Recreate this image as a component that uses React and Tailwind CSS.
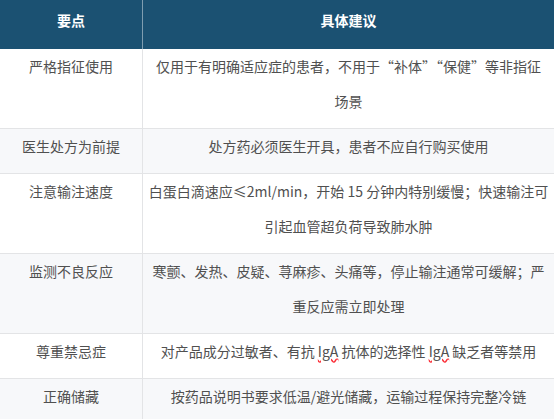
import React from 'react';

const rows = [
  {
    point: '严格指征使用',
    advice: ['仅用于有明确适应症的患者，不用于“补体”“保健”等非指征', '场景'],
  },
  {
    point: '医生处方为前提',
    advice: ['处方药必须医生开具，患者不应自行购买使用'],
  },
  {
    point: '注意输注速度',
    advice: ['白蛋白滴速应≤2ml/min，开始 15 分钟内特别缓慢；快速输注可', '引起血管超负荷导致肺水肿'],
  },
  {
    point: '监测不良反应',
    advice: ['寒颤、发热、皮疑、荨麻疹、头痛等，停止输注通常可缓解；严', '重反应需立即处理'],
  },
  {
    point: '尊重禁忌症',
    advice: [
      <>
        对产品成分过敏者、有抗 <span className="underline decoration-wavy decoration-red-500">IgA</span> 抗体的选择性{' '}
        <span className="underline decoration-wavy decoration-red-500">IgA</span> 缺乏者等禁用
      </>,
    ],
  },
  {
    point: '正确储藏',
    advice: ['按药品说明书要求低温/避光储藏，运输过程保持完整冷链'],
  },
];

const App = () => {
  return (
    <div
      className="w-[554px] h-[419px] overflow-hidden bg-white text-[14px]"
      style={{ fontFamily: '"Noto Sans CJK SC", "Noto Sans", sans-serif' }}
    >
      <div className="grid grid-cols-[143px_1fr] bg-[#1b5172] text-white font-bold">
        <div className="border-r border-[#7f9db0] text-center leading-[40px] pb-[9px]">要点</div>
        <div className="text-center leading-[40px] pb-[9px]">具体建议</div>
      </div>

      {rows.map((row, index) => (
        <div
          key={index}
          className={`grid grid-cols-[143px_1fr] border-b border-[#e3e4e6] text-[#505050] ${
            index % 2 === 1 ? 'bg-[#f7f8fa]' : 'bg-white'
          }`}
        >
          <div className="border-r border-[#e3e4e6] text-center leading-[35px] pb-[9px]">{row.point}</div>
          <div className="text-center leading-[35px] pb-[9px] px-[4px]">
            {row.advice.map((line, i) => (
              <div key={i} className="whitespace-nowrap">
                {line}
              </div>
            ))}
          </div>
        </div>
      ))}
    </div>
  );
};

export default App;
